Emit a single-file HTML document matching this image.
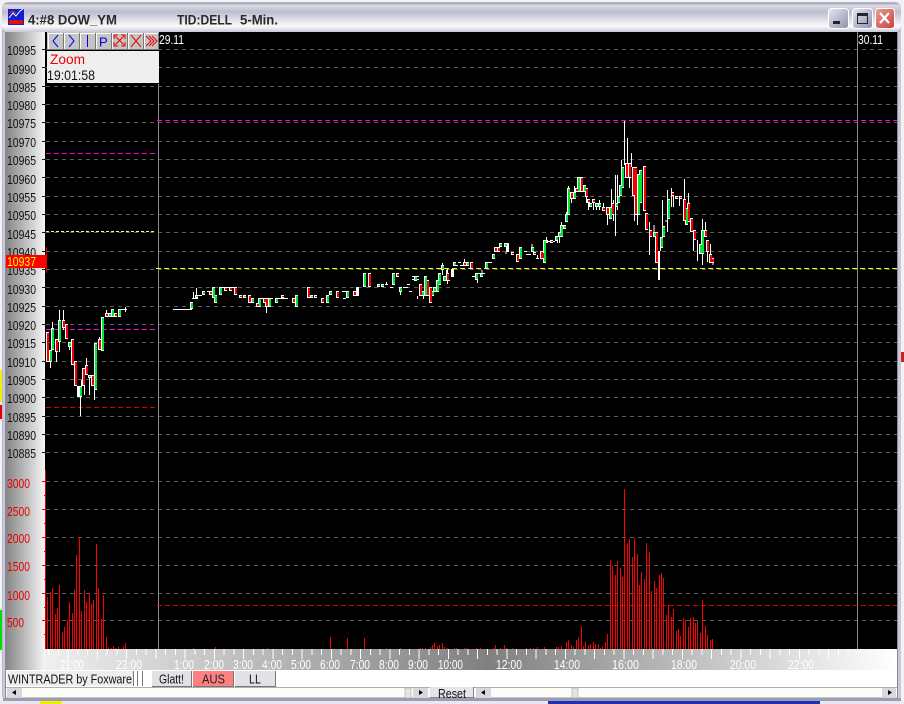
<!DOCTYPE html>
<html><head><meta charset="utf-8"><title>WinTrader</title>
<style>
html,body{margin:0;padding:0;background:#fff;width:904px;height:704px;overflow:hidden}
svg{display:block}
text{font-family:"Liberation Sans",sans-serif}
</style></head><body>
<svg width="904" height="704" viewBox="0 0 904 704" xmlns="http://www.w3.org/2000/svg">
<defs>
<linearGradient id="tb" x1="0" y1="0" x2="0" y2="1">
<stop offset="0" stop-color="#9a9ab0"/><stop offset=".08" stop-color="#dcdce6"/><stop offset=".3" stop-color="#bcbccf"/><stop offset=".8" stop-color="#fbfbfc"/><stop offset="1" stop-color="#c8c8d8"/>
</linearGradient>
<linearGradient id="ax" x1="0" y1="0" x2="1" y2="0">
<stop offset="0" stop-color="#868686"/><stop offset="1" stop-color="#f8f8f8"/>
</linearGradient>
<linearGradient id="tx" x1="0" y1="0" x2="1" y2="0">
<stop offset="0" stop-color="#f0f0f0"/><stop offset=".52" stop-color="#808080"/><stop offset="1" stop-color="#ffffff"/>
</linearGradient>
<linearGradient id="btn" x1="0" y1="0" x2="1" y2="1">
<stop offset="0" stop-color="#e8e8f0"/><stop offset="1" stop-color="#8f90aa"/>
</linearGradient>
<linearGradient id="cl" x1="0" y1="0" x2="1" y2="1">
<stop offset="0" stop-color="#eaa090"/><stop offset="1" stop-color="#c84040"/>
</linearGradient>
</defs>

<!-- outside junk -->
<rect x="0" y="0" width="904" height="704" fill="#f2f2f2"/>
<rect x="0" y="610" width="2" height="40" fill="#00e000"/>
<rect x="0" y="370" width="2" height="32" fill="#f0f000"/>
<rect x="0" y="405" width="2" height="14" fill="#e00000"/>
<rect x="901" y="352" width="3" height="10" fill="#d02020"/>
<rect x="0" y="701" width="904" height="3" fill="#e8e8ee"/>
<rect x="40" y="701" width="22" height="3" fill="#f0f000"/>
<rect x="548" y="701" width="272" height="3" fill="#2030b0"/>

<!-- window frame -->
<rect x="2" y="2" width="899" height="699" rx="6" fill="#b8b8cc"/>
<rect x="2" y="3" width="899" height="29" rx="6" fill="url(#tb)"/>
<rect x="3" y="32" width="3" height="666" fill="#c8c8d8"/>
<rect x="897" y="32" width="4" height="666" fill="#c8c8d8"/>
<rect x="5" y="32" width="893" height="667" fill="#fff"/>
<rect x="5" y="32" width="1" height="667" fill="#8888a0"/>
<rect x="897" y="32" width="1" height="667" fill="#8888a0"/>
<rect x="3" y="698" width="898" height="3" fill="#9c9cb4"/>

<!-- title icon -->
<rect x="8" y="9" width="16" height="16" fill="#1020d0"/>
<rect x="9" y="20" width="14" height="4" fill="#e01010"/>
<path d="M9 18l4-5 3 3 4-5 3-2" stroke="#ffffff" stroke-width="1" fill="none"/>
<path d="M9 14l3-3 4 2" stroke="#e02020" stroke-width="1" fill="none"/>

<text x="28" y="24.500" font-size="14" font-weight="bold" fill="#2a2a2a" textLength="89" lengthAdjust="spacingAndGlyphs">4:#8 DOW_YM</text>
<text x="177" y="24.500" font-size="14" font-weight="bold" fill="#2a2a2a" textLength="55" lengthAdjust="spacingAndGlyphs">TID:DELL</text>
<text x="240" y="24.500" font-size="14" font-weight="bold" fill="#2a2a2a" textLength="38" lengthAdjust="spacingAndGlyphs">5-Min.</text>

<!-- caption buttons -->
<rect x="828.5" y="8.5" width="20" height="20" rx="3" fill="url(#btn)" stroke="#fff"/>
<rect x="833" y="21" width="7" height="3" fill="#223"/>
<rect x="852.5" y="8.5" width="20" height="20" rx="3" fill="url(#btn)" stroke="#fff"/>
<rect x="857.5" y="13.5" width="10" height="10" fill="none" stroke="#223"/>
<rect x="857" y="13" width="11" height="3" fill="#223"/>
<rect x="875.5" y="8.5" width="19" height="20" rx="3" fill="url(#cl)" stroke="#fff"/>
<path d="M880 13l9 10M889 13l-9 10" stroke="#fff" stroke-width="2.2"/>

<!-- left axis -->
<rect x="6" y="32" width="40" height="638" fill="url(#ax)"/>
<!-- chart -->
<rect x="45" y="32" width="852" height="617" fill="#000"/>
<!-- time axis -->
<rect x="45" y="649" width="852" height="21" fill="url(#tx)"/>

<!-- grid -->
<path shape-rendering="crispEdges" fill="none" stroke="#5a5a5a" stroke-width="1" stroke-dasharray="4 4" d="M46 49.5H897M46 67.5H897M46 86.5H897M46 104.5H897M46 122.5H897M46 141.5H897M46 159.5H897M46 177.5H897M46 196.5H897M46 214.5H897M46 232.5H897M46 251.5H897M46 269.5H897M46 287.5H897M46 306.5H897M46 324.5H897M46 342.5H897M46 361.5H897M46 379.5H897M46 397.5H897M46 416.5H897M46 434.5H897M46 452.5H897M46 481.5H897M46 509.5H897M46 537.5H897M46 565.5H897M46 593.5H897M46 620.5H897"/>

<!-- vertical separators -->
<path shape-rendering="crispEdges" d="M158.5 84V649M857.5 32V649" stroke="#8c8c8c" stroke-width="1"/>

<!-- level lines -->
<path shape-rendering="crispEdges" d="M157 120.5H897M46 153.5H156M46 329.5H157" stroke="#ff00ff" stroke-dasharray="5 3" fill="none"/>
<path shape-rendering="crispEdges" d="M156 268.5H897" stroke="#ffff00" stroke-dasharray="5 3" fill="none"/>
<path shape-rendering="crispEdges" d="M46 231.5H156" stroke="#ffff90" stroke-dasharray="3 2" fill="none"/>
<path shape-rendering="crispEdges" d="M46 407.5H157M157 605.5H897" stroke="#e00000" stroke-dasharray="5 3" fill="none"/>

<!-- volume -->
<path shape-rendering="crispEdges" fill="none" stroke="#ff0000" stroke-width="1" d="M47.5 649V597M50.5 649V592M52.5 649V588M55.5 649V614M57.5 649V608M59.5 649V585M62.5 649V632M64.5 649V627M67.5 649V620M69.5 649V602M72.5 649V613M74.5 649V590M76.5 649V555M79.5 649V537M81.5 649V611M84.5 649V590M86.5 649V602M89.5 649V593M91.5 649V604M93.5 649V600M96.5 649V544M98.5 649V588M101.5 649V619M103.5 649V595M106.5 649V637M108.5 649V647M111.5 649V648M113.5 649V646M115.5 649V648M118.5 649V647M123.5 649V646M125.5 649V643
M193.5 649V648M215.5 649V647M267.5 649V648M330.5 649V637M347.5 649V638M364.5 649V638M386.5 649V648M400.5 649V648M420.5 649V648M422.5 649V648M425.5 649V648M430.5 649V647M432.5 649V645M434.5 649V643M437.5 649V646M439.5 649V645M442.5 649V643M444.5 649V647M447.5 649V648M454.5 649V648M456.5 649V648M464.5 649V648M466.5 649V648M476.5 649V648M480.5 649V648M493.5 649V648M495.5 649V645M500.5 649V648M504.5 649V645M506.5 649V648M512.5 649V648M526.5 649V648M530.5 649V648M533.5 649V648M537.5 649V647M544.5 649V647M556.5 649V647M558.5 649V647
M561.5 649V646M566.5 649V642M568.5 649V640M571.5 649V645M573.5 649V647M576.5 649V640M578.5 649V638M581.5 649V626M583.5 649V646M585.5 649V642M588.5 649V645M590.5 649V644M593.5 649V642M595.5 649V644M598.5 649V644M600.5 649V648M602.5 649V647M605.5 649V642M607.5 649V634M610.5 649V560M612.5 649V566M615.5 649V575M617.5 649V561M620.5 649V568M622.5 649V577M624.5 649V489M627.5 649V543M629.5 649V539M632.5 649V557M634.5 649V538M637.5 649V554M639.5 649V585M641.5 649V572M644.5 649V579M646.5 649V543M649.5 649V552M651.5 649V591M654.5 649V581M656.5 649V588M659.5 649V575M661.5 649V573M663.5 649V578M666.5 649V615M668.5 649V605M671.5 649V617M673.5 649V609M676.5 649V631M678.5 649V629M680.5 649V636M683.5 649V618M685.5 649V620M688.5 649V627M690.5 649V618M693.5 649V617M695.5 649V623M697.5 649V621M700.5 649V633M702.5 649V600M705.5 649V626M707.5 649V635M710.5 649V640M712.5 649V639"/>

<!-- wicks and flat bars -->
<path shape-rendering="crispEdges" fill="none" stroke="#fff" stroke-width="1" d="
M50.5 362V368M52.5 322V328M56.5 352V362M59.5 310V352M63.5 310V330M69.5 347V350M80.5 397V416M84.5 386V395M86.5 358V365M89.5 378V395M94.5 390V400M99.5 337V339M106.5 310V313M120 309.5H127M125.5 307V312M81.5 380V397
M173 309.5H192M193.5 292V298M192 298.5H198M196.5 288V298M198 295.5H202M207 291.5H212M222 287.5H237M261 298.5H273M266.5 307V313M268 298.5H273M278 298.5H288M309 295.5H311M342 291.5H346M343 298.5H346
M385 284.5H388M386.5 282V284M390 287.5H393M403 287.5H408M407 284.5H410M400.5 292V295M409 291.5H412M412 276.5H419M417.5 296V299M423.5 296V299M442.5 263V265M442.5 270V275M446.5 270V274M447.5 269V273M447.5 281V284M412 279.5H419M443 280.5H450M456 265.5H458M458 262.5H461M460 265.5H465M464.5 259V262M472 276.5H475M477.5 280V283M478 273.5H485M482 270V273M485 262.5H492M506 252V254M511 254.5H514M524 251.5H527M526 254.5H531M532 244V247M536 258.5H539M537.5 255V258M546.5 237V240M543 258.5H541
M546 241.5H555M546.5 237V241M557.5 241V243M559.5 237V243M561.5 222V225M566.5 212V214M568.5 186V188M571.5 199V203M574.5 186V192M586.5 197V203M588.5 203V210M593.5 203V210M596.5 207V210M599.5 200V210M603.5 203V207M607.5 215V225M611.5 189V219M613.5 200V221M615.5 175V236M617.5 175V210M621.5 160V188M624.5 121V165M627.5 138V163M629.5 178V188M631.5 153V167M634.5 215V221M637.5 215V225M649.5 222V255M654 225V232M660.5 248V251M662.5 200V226M667.5 190V232M671.5 188V207M673.5 196V207M679.5 199V206M684.5 179V199M688.5 193V203M693.5 240V251M697.5 240V261M702.5 219V265M705.5 222V230M707.5 252V262M710.5 244V254M713 263V265M665 221H668"/>

<!-- candle bodies (white) -->
<path shape-rendering="crispEdges" fill="none" stroke="#fff" stroke-width="3" d="
M47.5 332V362M50.5 350V362M52.5 328V350M56.5 339V352M59.5 320V342M63.5 320V328M66.5 324V339M69.5 342V347M72.5 339V365M75.5 361V386M78.5 386V397M80.5 386V397M83.5 368V386M86.5 365V375M89.5 375V378M92.5 375V386M95.5 343V390M99.5 339V350M102.5 317V351M106.5 313V317M109.5 313V317M112.5 309V317M115.5 313V317M119.5 309V317
M191.5 302V309M196.5 295V298M203.5 291V295M210.5 291V295M213.5 287V298M215.5 295V303M220.5 287V295M225.5 287V291M230.5 287V291M235.5 287V295M240.5 295V298M244.5 295V298M249.5 295V303M252.5 298V303M257.5 303V307M259.5 298V307M264.5 298V303M266.5 298V307M269.5 298V307M276.5 298V303M282.5 295V298M293.5 298V303M296.5 295V307M308.5 287V298M311.5 295V298M315.5 295V298M322.5 298V303M327.5 295V303M330.5 291V295M337.5 291V298M347.5 291V298
M354.5 291V296M357.5 287V296M364.5 273V287M369.5 273V287M378.5 284V287M382.5 284V287M393.5 273V285M397.5 273V277M400.5 287V292M415.5 276V281M420.5 284V296M422.5 291V296M425.5 276V296M427.5 280V296M430.5 287V303M432.5 291V296M434.5 287V292M437.5 280V292M439.5 273V285M442.5 265V270M444.5 276V281M447.5 273V281M452.5 269V277M454.5 262V266M464.5 262V266M467.5 262V266M471.5 262V269M476.5 273V280M481.5 273V277M486.5 262V269M493.5 254V259M495.5 247V252M498.5 247V252M500.5 243V247M505.5 243V247M507.5 243V252M512.5 252V255M517.5 254V262M520.5 247V259M532.5 247V252M534.5 252V255M542.5 252V259M544.5 240V262M546.5 240V243
M541.5 251V259M544.5 240V263M551.5 240V243M556.5 236V241M559.5 232V237M561.5 225V237M564.5 225V229M566.5 214V222M568.5 188V215M571.5 192V199M574.5 192V199M576.5 188V192M578.5 177V192M581.5 177V192M584.5 185V192M586.5 188V197M588.5 199V203M590.5 203V207M593.5 199V203M596.5 203V207M599.5 203V207M603.5 207V211M607.5 207V215M610.5 207V219M612.5 203V215M616.5 203V207M618.5 196V203M620.5 185V196M622.5 167V188M626.5 163V178M629.5 163V178M633.5 167V196M635.5 167V215M638.5 174V215M640.5 170V203M644.5 166V211M646.5 213V230M650.5 230V237M654.5 232V237M656.5 232V263M661.5 237V248M663.5 226V237M668.5 199V219M672.5 192V196M676.5 196V199M680.5 196V199M684.5 199V221M686.5 208V225M688.5 203V222M691.5 218V232M694.5 230V240M700.5 244V254M702.5 230V254M705.5 230V237M707.5 240V252M710.5 254V263M712.5 258V263"/>
<rect x="658" y="251" width="2" height="29" fill="#fff" shape-rendering="crispEdges"/>

<!-- green interiors -->
<path shape-rendering="crispEdges" fill="none" stroke="#00e832" stroke-width="2" d="
M51 351V361M53 329V349M60 321V341M70 343V346M81 387V396M90 376V377M96 344V389M103 318V350M110 314V316M113 310V316M120 310V316
M192 303V308M197 296V297M204 292V294M214 288V297M216 296V302M221 288V294M245 296V297M253 299V302M260 299V306M270 299V306M277 299V302M297 296V306M312 296V297M328 296V302M331 292V294M348 292V297
M365 274V286M379 285V286M383 285V286M394 274V284M401 288V291M416 277V280M423 292V295M426 277V295M433 292V295M435 288V291M438 281V291M440 274V284M443 266V269M445 277V280M455 263V265M468 263V265M477 274V279M482 274V276M487 263V268M494 255V258M501 244V246M506 244V246M521 248V258M533 248V251M545 241V261
M545 241V262M557 237V240M560 233V236M562 226V236M565 226V228M567 215V221M569 189V214M575 193V198M579 178V191M585 186V191M591 204V206M597 204V206M600 204V206M611 208V218M617 204V206M619 197V202M621 186V195M623 168V187M639 175V214M641 171V202M655 233V236M662 238V247M664 227V236M669 200V218M687 209V224M701 245V253M703 231V253"/>

<!-- red interiors -->
<path shape-rendering="crispEdges" fill="none" stroke="#f00000" stroke-width="2" d="
M48 333V361M57 340V351M64 321V327M67 325V338M73 340V364M76 362V385M84 369V385M87 366V374M93 376V385M100 340V349M107 314V316M116 314V316
M211 292V294M226 288V290M231 288V290M236 288V294M241 296V297M250 296V302M258 304V306M265 299V302M267 299V306M283 296V297M294 299V302M309 288V297M316 296V297M323 299V302M338 292V297
M355 292V295M370 274V286M398 274V276M421 285V295M428 281V295M431 288V302M448 274V280M465 263V265M472 263V268M496 248V251M499 248V251M513 253V254M518 255V261M535 253V254M543 253V258
M542 252V258M552 241V242M572 193V198M577 189V191M582 178V191M587 189V196M589 200V202M594 200V202M604 208V210M608 208V214M613 204V214M627 164V177M630 164V177M634 168V195M636 168V214M645 167V210M647 214V229M651 231V236M657 233V262M673 193V195M677 197V198M681 197V198M685 200V220M689 204V221M692 219V231M695 231V239M706 231V236M708 241V251M711 255V262M713 259V262"/>

<!-- axis lines & ticks -->
<rect x="45" y="470" width="1" height="179" fill="#e00000"/>
<path shape-rendering="crispEdges" stroke="#111" stroke-width="1" d="M42 49.5H46M42 67.5H46M42 86.5H46M42 104.5H46M42 122.5H46M42 141.5H46M42 159.5H46M42 177.5H46M42 196.5H46M42 214.5H46M42 232.5H46M42 251.5H46M42 269.5H46M42 287.5H46M42 306.5H46M42 324.5H46M42 342.5H46M42 361.5H46M42 379.5H46M42 397.5H46M42 416.5H46M42 434.5H46M42 452.5H46"/>
<path shape-rendering="crispEdges" stroke="#e00000" stroke-width="1" d="M42 481.5H46M42 509.5H46M42 537.5H46M42 565.5H46M42 593.5H46M42 620.5H46M44 495.5H46M44 523.5H46M44 551.5H46M44 579.5H46M44 607.5H46M44 634.5H46"/>

<!-- price labels -->
<g font-size="13" fill="#111">
<text x="7" y="55" textLength="29" lengthAdjust="spacingAndGlyphs">10995</text>
<text x="7" y="74" textLength="29" lengthAdjust="spacingAndGlyphs">10990</text>
<text x="7" y="92" textLength="29" lengthAdjust="spacingAndGlyphs">10985</text>
<text x="7" y="110" textLength="29" lengthAdjust="spacingAndGlyphs">10980</text>
<text x="7" y="128" textLength="29" lengthAdjust="spacingAndGlyphs">10975</text>
<text x="7" y="147" textLength="29" lengthAdjust="spacingAndGlyphs">10970</text>
<text x="7" y="165" textLength="29" lengthAdjust="spacingAndGlyphs">10965</text>
<text x="7" y="184" textLength="29" lengthAdjust="spacingAndGlyphs">10960</text>
<text x="7" y="202" textLength="29" lengthAdjust="spacingAndGlyphs">10955</text>
<text x="7" y="220" textLength="29" lengthAdjust="spacingAndGlyphs">10950</text>
<text x="7" y="239" textLength="29" lengthAdjust="spacingAndGlyphs">10945</text>
<text x="7" y="257" textLength="29" lengthAdjust="spacingAndGlyphs">10940</text>
<text x="7" y="275" textLength="29" lengthAdjust="spacingAndGlyphs">10935</text>
<text x="7" y="294" textLength="29" lengthAdjust="spacingAndGlyphs">10930</text>
<text x="7" y="312" textLength="29" lengthAdjust="spacingAndGlyphs">10925</text>
<text x="7" y="330" textLength="29" lengthAdjust="spacingAndGlyphs">10920</text>
<text x="7" y="348" textLength="29" lengthAdjust="spacingAndGlyphs">10915</text>
<text x="7" y="367" textLength="29" lengthAdjust="spacingAndGlyphs">10910</text>
<text x="7" y="385" textLength="29" lengthAdjust="spacingAndGlyphs">10905</text>
<text x="7" y="403" textLength="29" lengthAdjust="spacingAndGlyphs">10900</text>
<text x="7" y="422" textLength="29" lengthAdjust="spacingAndGlyphs">10895</text>
<text x="7" y="440" textLength="29" lengthAdjust="spacingAndGlyphs">10890</text>
<text x="7" y="458" textLength="29" lengthAdjust="spacingAndGlyphs">10885</text>
</g>
<!-- volume labels -->
<g font-size="13" fill="#e80000">
<text x="7" y="488" textLength="23" lengthAdjust="spacingAndGlyphs">3000</text>
<text x="7" y="516" textLength="23" lengthAdjust="spacingAndGlyphs">2500</text>
<text x="7" y="543" textLength="23" lengthAdjust="spacingAndGlyphs">2000</text>
<text x="7" y="571" textLength="23" lengthAdjust="spacingAndGlyphs">1500</text>
<text x="7" y="600" textLength="23" lengthAdjust="spacingAndGlyphs">1000</text>
<text x="7" y="627" textLength="17" lengthAdjust="spacingAndGlyphs">500</text>
</g>

<!-- current price tag -->
<rect x="6" y="255" width="40" height="13" fill="#ff0000"/>
<rect x="46" y="247" width="1" height="26" fill="#e00000"/>
<text x="7" y="266" font-size="13" fill="#ffff00" textLength="29" lengthAdjust="spacingAndGlyphs">10937</text>

<!-- date labels -->
<text x="159" y="44" font-size="13" fill="#fff" textLength="25" lengthAdjust="spacingAndGlyphs">29.11</text>
<text x="858" y="44" font-size="13" fill="#fff" textLength="25" lengthAdjust="spacingAndGlyphs">30.11</text>

<!-- toolbar -->
<rect x="47" y="32" width="112" height="18" fill="#c4c4c4"/>
<path shape-rendering="crispEdges" stroke="#fff" d="M48.5 33V50M64.5 33V50M80.5 33V50M96.5 33V50M112.5 33V50M128.5 33V50M144.5 33V50M47 33.5H159"/>
<path shape-rendering="crispEdges" stroke="#777" d="M63.5 33V50M79.5 33V50M95.5 33V50M111.5 33V50M127.5 33V50M143.5 33V50M158.5 33V50M47 49.5H159"/>
<path d="M58 35l-5 6 5 6" stroke="#0000f0" fill="none"/>
<path d="M69 35l5 6-5 6" stroke="#0000f0" fill="none"/>
<path d="M87.5 35V47" stroke="#0000f0" fill="none"/>
<text x="99" y="46.500" font-size="13" fill="#0000e0">P</text>
<path d="M115 36l9 9M124 36l-9 9M114 39v-4h4M125 39v-4h-4M114 42v4h4M125 42v4h-4" stroke="#f00000" fill="none"/>
<path d="M131 35l10 12M141 35l-10 12" stroke="#f00000" fill="none"/>
<path d="M146 36l5 5-5 5M149 36l5 5-5 5M152 36l5 5-5 5" stroke="#f00000" fill="none"/>

<!-- info box -->
<rect x="47" y="51" width="112" height="32" fill="#eeeeee"/>
<text x="50" y="64" font-size="14" fill="#f00000" textLength="35" lengthAdjust="spacingAndGlyphs">Zoom</text>
<text x="47" y="80" font-size="13.5" fill="#111" textLength="48" lengthAdjust="spacingAndGlyphs">19:01:58</text>

<!-- time axis ticks -->
<path shape-rendering="crispEdges" d="M48.2 652H851" stroke="#fff" stroke-width="6" stroke-dasharray="1 8.75" fill="none"/>
<path shape-rendering="crispEdges" d="M67.7 654H851" stroke="#fff" stroke-width="10" stroke-dasharray="1 28.25" fill="none"/>

<g font-size="13" fill="#fff">
<text x="60" y="669" textLength="24" lengthAdjust="spacingAndGlyphs">21:00</text>
<text x="116" y="669" textLength="26" lengthAdjust="spacingAndGlyphs">23:00</text>
<text x="174" y="669" textLength="20" lengthAdjust="spacingAndGlyphs">1:00</text>
<text x="204" y="669" textLength="20" lengthAdjust="spacingAndGlyphs">2:00</text>
<text x="233" y="669" textLength="20" lengthAdjust="spacingAndGlyphs">3:00</text>
<text x="262" y="669" textLength="20" lengthAdjust="spacingAndGlyphs">4:00</text>
<text x="291" y="669" textLength="20" lengthAdjust="spacingAndGlyphs">5:00</text>
<text x="320" y="669" textLength="20" lengthAdjust="spacingAndGlyphs">6:00</text>
<text x="350" y="669" textLength="20" lengthAdjust="spacingAndGlyphs">7:00</text>
<text x="379" y="669" textLength="20" lengthAdjust="spacingAndGlyphs">8:00</text>
<text x="408" y="669" textLength="20" lengthAdjust="spacingAndGlyphs">9:00</text>
<text x="438" y="669" textLength="25" lengthAdjust="spacingAndGlyphs">10:00</text>
<text x="496" y="669" textLength="26" lengthAdjust="spacingAndGlyphs">12:00</text>
<text x="554" y="669" textLength="26" lengthAdjust="spacingAndGlyphs">14:00</text>
<text x="612" y="669" textLength="27" lengthAdjust="spacingAndGlyphs">16:00</text>
<text x="671" y="669" textLength="26" lengthAdjust="spacingAndGlyphs">18:00</text>
<text x="730" y="669" textLength="26" lengthAdjust="spacingAndGlyphs">20:00</text>
<text x="788" y="669" textLength="26" lengthAdjust="spacingAndGlyphs">22:00</text>
</g>

<!-- bottom bar -->
<rect x="6" y="670" width="891" height="17" fill="#fff"/>
<rect x="7" y="671" width="126" height="15" fill="#eeeeee"/>
<path shape-rendering="crispEdges" d="M133.5 671V686M137.5 671V686M142.5 671V686" stroke="#777"/>
<text x="8" y="683.500" font-size="13" fill="#111" textLength="124" lengthAdjust="spacingAndGlyphs">WINTRADER by Foxware</text>
<rect x="152" y="671" width="40" height="16" fill="#e2e2e6"/>
<path shape-rendering="crispEdges" d="M191.5 671V687M152 686.5H192" stroke="#777"/>
<text x="159" y="683.500" font-size="13" fill="#111" textLength="25" lengthAdjust="spacingAndGlyphs">Glatt!</text>
<rect x="193" y="671" width="41" height="16" fill="#ff8080"/>
<path shape-rendering="crispEdges" d="M233.5 671V687M193 686.5H234" stroke="#777"/>
<text x="202" y="683.500" font-size="13" fill="#222" textLength="23" lengthAdjust="spacingAndGlyphs">AUS</text>
<rect x="235" y="671" width="41" height="16" fill="#e2e2e6"/>
<path shape-rendering="crispEdges" d="M275.5 671V687M235 686.5H276" stroke="#777"/>
<text x="249" y="683.500" font-size="13" fill="#111" textLength="12" lengthAdjust="spacingAndGlyphs">LL</text>

<!-- scrollbars -->
<rect x="6" y="687" width="891" height="11" fill="#fdfdf8"/>
<rect x="6" y="687" width="891" height="1" fill="#b0b0b0"/>
<rect x="6" y="697" width="891" height="1" fill="#c8c8c8"/>
<rect x="7" y="688" width="15" height="10" fill="#d8d8dc"/><path d="M16 690v5l-4-2.500z" fill="#000"/>
<rect x="405" y="688" width="6" height="10" fill="#e4e4e0" stroke="#999" stroke-width=".5"/>
<rect x="413" y="688" width="15" height="10" fill="#d8d8dc"/><path d="M419 690v5l4-2.500z" fill="#000"/>
<rect x="430" y="687" width="44" height="11" fill="#e4e4ea"/>
<path shape-rendering="crispEdges" d="M473.500 687V698M430 697.500H474" stroke="#888"/>
<text x="438" y="698" font-size="13" fill="#111" textLength="28" lengthAdjust="spacingAndGlyphs">Reset</text>
<rect x="476" y="688" width="15" height="10" fill="#d8d8dc"/><path d="M485 690v5l-4-2.500z" fill="#000"/>
<rect x="572" y="688" width="6" height="10" fill="#e4e4e0" stroke="#999" stroke-width=".5"/>
<rect x="882" y="688" width="14" height="10" fill="#d8d8dc"/><path d="M888 690v5l4-2.500z" fill="#000"/>
</svg>
</body></html>
